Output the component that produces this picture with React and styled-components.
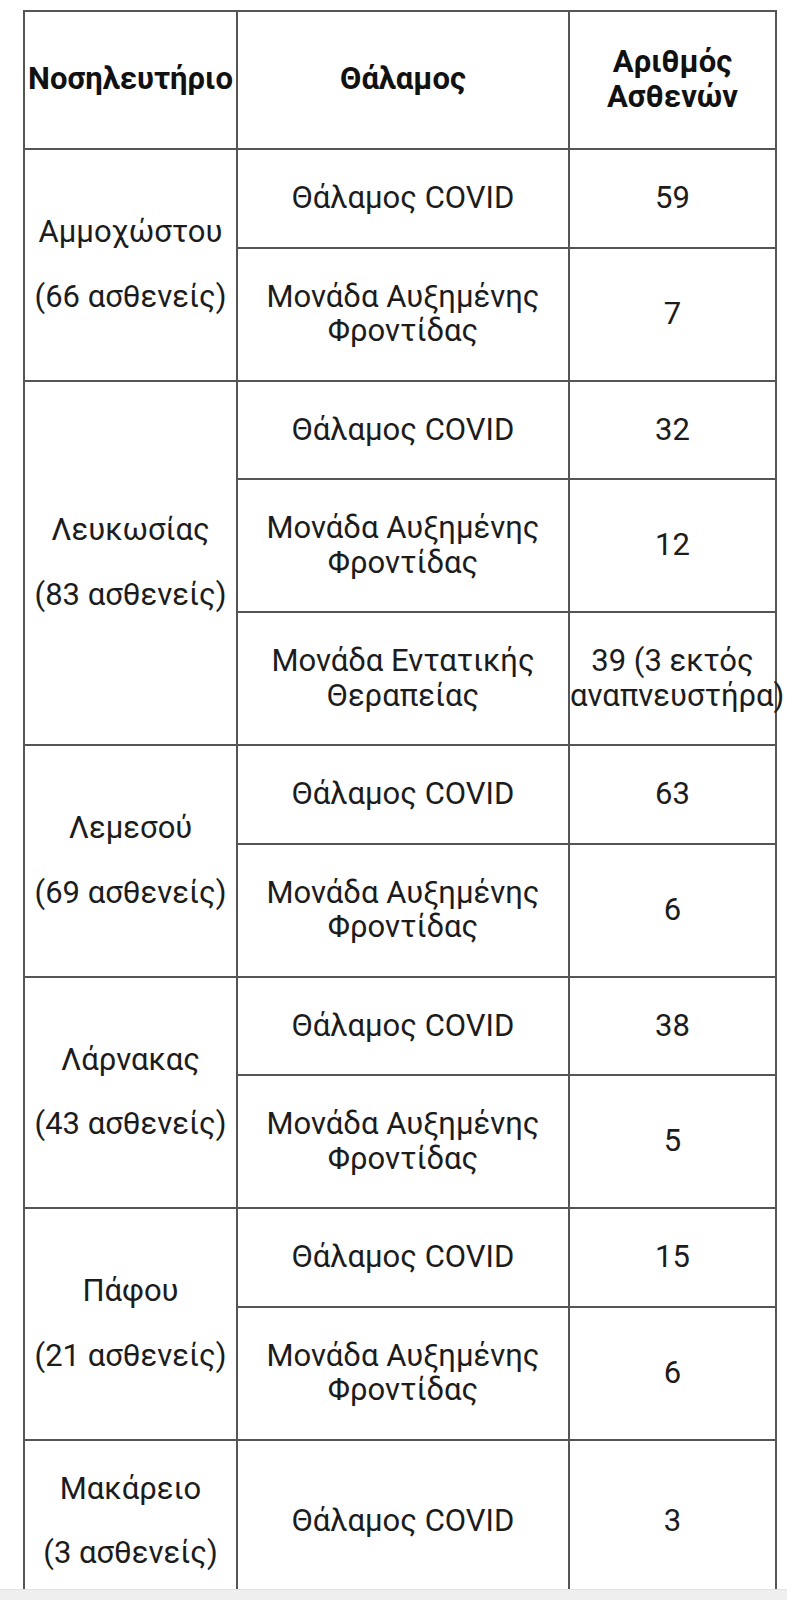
import React from "react";
import styled, { createGlobalStyle } from "styled-components";

const Global = createGlobalStyle`
  html, body { margin: 0; padding: 0; background: #fff; }
  body { font-family: Roboto, "Noto Sans", "DejaVu Sans", sans-serif; color: #1c1c1c; }
`;

const Page = styled.div`
  padding: 10px 10px 0 23px;
`;

const Table = styled.table`
  width: 754px;
  table-layout: fixed;
  border-collapse: collapse;
  border: 2px solid #555;
  font-size: 31px;
  line-height: 34.5px;
`;

const HeadCell = styled.th`
  border: 2px solid #555;
  padding: 33px 0 34px;
  font-weight: 700;
  color: #111;
  text-align: center;
  vertical-align: middle;
  white-space: nowrap;
`;

const Cell = styled.td`
  border: 2px solid #555;
  padding: 31px 0;
  text-align: center;
  vertical-align: middle;
  white-space: nowrap;
`;

const Gap = styled.span`
  display: block;
  height: 30px;
`;

const BottomBar = styled.div`
  position: fixed;
  left: 0;
  right: 0;
  bottom: 0;
  height: 10px;
  background: #efefef;
  border-top: 1px solid #e2e2e2;
`;

const hospitals = [
  {
    name: "Αμμοχώστου",
    total: "(66 ασθενείς)",
    wards: [
      ["Θάλαμος COVID", "59"],
      [["Μονάδα Αυξημένης", "Φροντίδας"], "7"],
    ],
  },
  {
    name: "Λευκωσίας",
    total: "(83 ασθενείς)",
    wards: [
      ["Θάλαμος COVID", "32"],
      [["Μονάδα Αυξημένης", "Φροντίδας"], "12"],
      [["Μονάδα Εντατικής", "Θεραπείας"], ["39 (3 εκτός", "αναπνευστήρα)"]],
    ],
  },
  {
    name: "Λεμεσού",
    total: "(69 ασθενείς)",
    wards: [
      ["Θάλαμος COVID", "63"],
      [["Μονάδα Αυξημένης", "Φροντίδας"], "6"],
    ],
  },
  {
    name: "Λάρνακας",
    total: "(43 ασθενείς)",
    wards: [
      ["Θάλαμος COVID", "38"],
      [["Μονάδα Αυξημένης", "Φροντίδας"], "5"],
    ],
  },
  {
    name: "Πάφου",
    total: "(21 ασθενείς)",
    wards: [
      ["Θάλαμος COVID", "15"],
      [["Μονάδα Αυξημένης", "Φροντίδας"], "6"],
    ],
  },
  {
    name: "Μακάρειο",
    total: "(3 ασθενείς)",
    wards: [["Θάλαμος COVID", "3"]],
  },
];

const Lines = ({ value }) =>
  Array.isArray(value)
    ? value.map((l, i) => (
        <React.Fragment key={i}>
          {i > 0 && <br />}
          {l}
        </React.Fragment>
      ))
    : value;

export default function App() {
  return (
    <>
      <Global />
      <Page>
        <Table>
          <colgroup>
            <col style={{ width: 213 }} />
            <col style={{ width: 332 }} />
            <col />
          </colgroup>
          <thead>
            <tr>
              <HeadCell>Νοσηλευτήριο</HeadCell>
              <HeadCell>Θάλαμος</HeadCell>
              <HeadCell>
                Αριθμός
                <br />
                Ασθενών
              </HeadCell>
            </tr>
          </thead>
          <tbody>
            {hospitals.map((h) =>
              h.wards.map((w, i) => (
                <tr key={h.name + i}>
                  {i === 0 && (
                    <Cell rowSpan={h.wards.length}>
                      {h.name}
                      <Gap />
                      {h.total}
                    </Cell>
                  )}
                  <Cell>
                    <Lines value={w[0]} />
                  </Cell>
                  <Cell>
                    <Lines value={w[1]} />
                  </Cell>
                </tr>
              ))
            )}
          </tbody>
        </Table>
      </Page>
      <BottomBar />
    </>
  );
}
